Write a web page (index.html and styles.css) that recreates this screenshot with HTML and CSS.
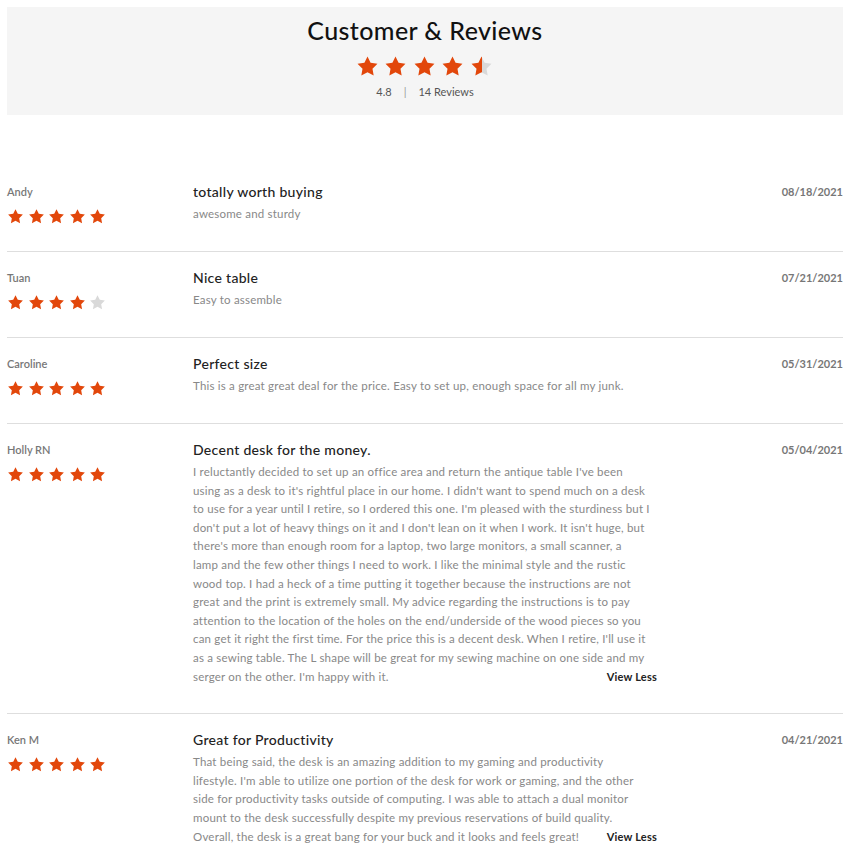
FILE: index.html
```html
<!DOCTYPE html>
<html lang="en">
<head>
<meta charset="utf-8">
<title>Customer &amp; Reviews</title>
<link rel="stylesheet" href="styles.css">
</head>
<body>
<svg class="defs" width="0" height="0" aria-hidden="true">
  <defs>
    <symbol id="star" viewBox="0 0 24 24"><path d="M12 1.6l3.2 6.6 7.2 1-5.2 5.1 1.25 7.2L12 18.1l-6.45 3.4 1.25-7.2-5.2-5.1 7.2-1z"/></symbol>
    <linearGradient id="half" x1="0" x2="1" y1="0" y2="0">
      <stop offset="50%" stop-color="#e2470b"/>
      <stop offset="50%" stop-color="#d9d9d9"/>
    </linearGradient>
  </defs>
</svg>
<div class="page">
  <section class="summary">
    <h1 class="summary-title">Customer &amp; Reviews</h1>
    <div class="stars stars-lg">
      <svg class="star on"><use href="#star"/></svg>
      <svg class="star on"><use href="#star"/></svg>
      <svg class="star on"><use href="#star"/></svg>
      <svg class="star on"><use href="#star"/></svg>
      <svg class="star half"><use href="#star"/></svg>
    </div>
    <div class="summary-meta"><span>4.8</span><span class="sep">|</span><span>14 Reviews</span></div>
  </section>

  <section class="reviews">
    <article class="review">
      <div class="author">
        <div class="name">Andy</div>
        <div class="stars">
          <svg class="star on"><use href="#star"/></svg><svg class="star on"><use href="#star"/></svg><svg class="star on"><use href="#star"/></svg><svg class="star on"><use href="#star"/></svg><svg class="star on"><use href="#star"/></svg>
        </div>
      </div>
      <div class="content">
        <h2 class="title">totally worth buying</h2>
        <p class="text">awesome and sturdy</p>
      </div>
      <div class="date">08/18/2021</div>
    </article>

    <article class="review">
      <div class="author">
        <div class="name">Tuan</div>
        <div class="stars">
          <svg class="star on"><use href="#star"/></svg><svg class="star on"><use href="#star"/></svg><svg class="star on"><use href="#star"/></svg><svg class="star on"><use href="#star"/></svg><svg class="star off"><use href="#star"/></svg>
        </div>
      </div>
      <div class="content">
        <h2 class="title">Nice table</h2>
        <p class="text">Easy to assemble</p>
      </div>
      <div class="date">07/21/2021</div>
    </article>

    <article class="review">
      <div class="author">
        <div class="name">Caroline</div>
        <div class="stars">
          <svg class="star on"><use href="#star"/></svg><svg class="star on"><use href="#star"/></svg><svg class="star on"><use href="#star"/></svg><svg class="star on"><use href="#star"/></svg><svg class="star on"><use href="#star"/></svg>
        </div>
      </div>
      <div class="content">
        <h2 class="title">Perfect size</h2>
        <p class="text">This is a great great deal for the price. Easy to set up, enough space for all my junk.</p>
      </div>
      <div class="date">05/31/2021</div>
    </article>

    <article class="review">
      <div class="author">
        <div class="name">Holly RN</div>
        <div class="stars">
          <svg class="star on"><use href="#star"/></svg><svg class="star on"><use href="#star"/></svg><svg class="star on"><use href="#star"/></svg><svg class="star on"><use href="#star"/></svg><svg class="star on"><use href="#star"/></svg>
        </div>
      </div>
      <div class="content">
        <h2 class="title">Decent desk for the money.</h2>
        <p class="text">I reluctantly decided to set up an office area and return the antique table I've been<br>
using as a desk to it's rightful place in our home. I didn't want to spend much on a desk<br>
to use for a year until I retire, so I ordered this one. I'm pleased with the sturdiness but I<br>
don't put a lot of heavy things on it and I don't lean on it when I work. It isn't huge, but<br>
there's more than enough room for a laptop, two large monitors, a small scanner, a<br>
lamp and the few other things I need to work. I like the minimal style and the rustic<br>
wood top. I had a heck of a time putting it together because the instructions are not<br>
great and the print is extremely small. My advice regarding the instructions is to pay<br>
attention to the location of the holes on the end/underside of the wood pieces so you<br>
can get it right the first time. For the price this is a decent desk. When I retire, I'll use it<br>
as a sewing table. The L shape will be great for my sewing machine on one side and my<br>
serger on the other. I'm happy with it. <a class="toggle" href="#">View Less</a></p>
      </div>
      <div class="date">05/04/2021</div>
    </article>

    <article class="review">
      <div class="author">
        <div class="name">Ken M</div>
        <div class="stars">
          <svg class="star on"><use href="#star"/></svg><svg class="star on"><use href="#star"/></svg><svg class="star on"><use href="#star"/></svg><svg class="star on"><use href="#star"/></svg><svg class="star on"><use href="#star"/></svg>
        </div>
      </div>
      <div class="content">
        <h2 class="title">Great for Productivity</h2>
        <p class="text">That being said, the desk is an amazing addition to my gaming and productivity<br>
lifestyle. I'm able to utilize one portion of the desk for work or gaming, and the other<br>
side for productivity tasks outside of computing. I was able to attach a dual monitor<br>
mount to the desk successfully despite my previous reservations of build quality.<br>
Overall, the desk is a great bang for your buck and it looks and feels great! <a class="toggle" href="#">View Less</a></p>
      </div>
      <div class="date">04/21/2021</div>
    </article>
  </section>
</div>
</body>
</html>
```

FILE: styles.css
```css
* { box-sizing: border-box; }

html, body {
  margin: 0;
  padding: 0;
  background: #ffffff;
}

body {
  font-family: Lato, "Open Sans", "Liberation Sans", sans-serif;
  color: #222;
}

.defs {
  position: absolute;
  width: 0;
  height: 0;
  overflow: hidden;
}

.page {
  padding: 7px;
}

.summary {
  background: #f5f5f5;
  height: 108px;
  padding-top: 8px;
  text-align: center;
}

.summary-title {
  margin: 0;
  font-size: 25px;
  line-height: 30px;
  font-weight: 500;
  color: #111;
  letter-spacing: 0.4px;
}

.stars {
  display: flex;
  gap: 3.5px;
}

.stars-lg {
  justify-content: center;
  gap: 5.5px;
  margin-top: 10px;
  padding-right: 2px;
}

.star {
  width: 17px;
  height: 17px;
  display: block;
}

.stars-lg .star {
  width: 23px;
  height: 23px;
}

.star.on { fill: #e2470b; }
.star.off { fill: #d9d9d9; }
.star.half { fill: url(#half); }

.summary-meta {
  margin-top: 6px;
  font-size: 11px;
  line-height: 16px;
  color: #555;
  display: flex;
  justify-content: center;
  gap: 12px;
}

.summary-meta .sep {
  color: #999;
}

.reviews {
  margin-top: 51px;
}

.review {
  display: grid;
  grid-template-columns: 186px 464px 1fr;
  align-items: start;
  padding: 16px 0 27px;
  border-bottom: 1px solid #dedede;
}

.name {
  font-size: 11px;
  line-height: 20px;
  font-weight: 600;
  color: #777;
}

.author .stars {
  margin-top: 6px;
  height: 16px;
}

.title {
  margin: 0;
  font-size: 14px;
  line-height: 20px;
  font-weight: 500;
  color: #222;
  letter-spacing: 0.3px;
}

.text {
  margin: 3px 0 0;
  font-size: 11.5px;
  line-height: 18.6px;
  color: #888;
  letter-spacing: 0.2px;
}

.toggle {
  float: right;
  color: #222;
  font-weight: 700;
  font-size: 11px;
  letter-spacing: 0.2px;
  text-decoration: none;
}

.date {
  text-align: right;
  font-size: 11px;
  line-height: 20px;
  font-weight: 700;
  color: #777;
  letter-spacing: 0;
}
```
